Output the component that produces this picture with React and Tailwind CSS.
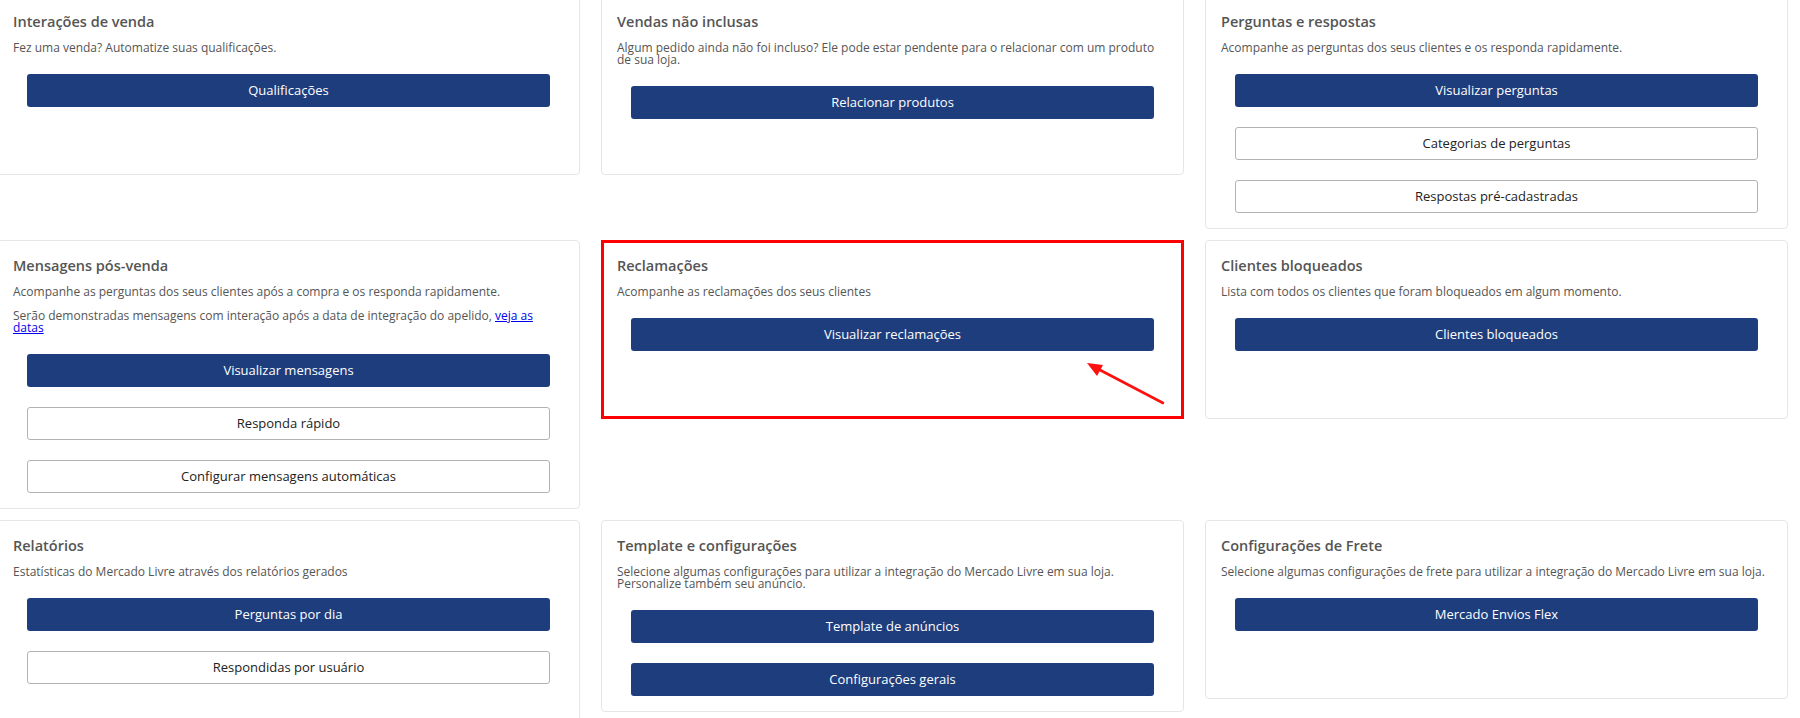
import React from "react";

const cards = [
  {
    title: "Interações de venda",
    desc: ["Fez uma venda? Automatize suas qualificações."],
    buttons: [{ label: "Qualificações", primary: true }],
  },
  {
    title: "Vendas não inclusas",
    desc: [
      "Algum pedido ainda não foi incluso? Ele pode estar pendente para o relacionar com um produto de sua loja.",
    ],
    buttons: [{ label: "Relacionar produtos", primary: true }],
  },
  {
    title: "Perguntas e respostas",
    desc: ["Acompanhe as perguntas dos seus clientes e os responda rapidamente."],
    buttons: [
      { label: "Visualizar perguntas", primary: true },
      { label: "Categorias de perguntas" },
      { label: "Respostas pré-cadastradas" },
    ],
  },
  {
    title: "Mensagens pós-venda",
    desc: [
      "Acompanhe as perguntas dos seus clientes após a compra e os responda rapidamente.",
      "LINK",
    ],
    buttons: [
      { label: "Visualizar mensagens", primary: true },
      { label: "Responda rápido" },
      { label: "Configurar mensagens automáticas" },
    ],
  },
  {
    title: "Reclamações",
    desc: ["Acompanhe as reclamações dos seus clientes"],
    buttons: [{ label: "Visualizar reclamações", primary: true }],
    highlight: true,
  },
  {
    title: "Clientes bloqueados",
    desc: ["Lista com todos os clientes que foram bloqueados em algum momento."],
    buttons: [{ label: "Clientes bloqueados", primary: true }],
  },
  {
    title: "Relatórios",
    desc: ["Estatísticas do Mercado Livre através dos relatórios gerados"],
    buttons: [
      { label: "Perguntas por dia", primary: true },
      { label: "Respondidas por usuário" },
    ],
    tall: true,
  },
  {
    title: "Template e configurações",
    desc: [
      "Selecione algumas configurações para utilizar a integração do Mercado Livre em sua loja. Personalize também seu anúncio.",
    ],
    buttons: [
      { label: "Template de anúncios", primary: true },
      { label: "Configurações gerais", primary: true },
    ],
  },
  {
    title: "Configurações de Frete",
    desc: [
      "Selecione algumas configurações de frete para utilizar a integração do Mercado Livre em sua loja.",
    ],
    buttons: [{ label: "Mercado Envios Flex", primary: true }],
  },
];

function Card({ card }) {
  return (
    <div
      className={
        "relative bg-white border border-[#e6e6e6] rounded-[4px] p-[15px] self-start " +
        (card.tall ? "min-h-[240px]" : "min-h-[179px]")
      }
    >
      <h3 className="text-[14.5px] leading-[20px] font-semibold text-[#555555] mb-[10px]">
        {card.title}
      </h3>
      <div className="flex flex-col gap-[12px]">
        {card.desc.map((d, i) =>
          d === "LINK" ? (
            <p key={i} className="text-[12px] leading-[12px] text-[#555555]">
              Serão demonstradas mensagens com interação após a data de integração do apelido,{" "}
              <a href="#" className="text-[#0000ee] underline">
                veja as datas
              </a>
            </p>
          ) : (
            <p key={i} className="text-[12px] leading-[12px] text-[#555555]">
              {d}
            </p>
          )
        )}
      </div>
      <div className="mt-[20px] px-[14px] flex flex-col gap-[20px]">
        {card.buttons.map((b, i) => (
          <button
            key={i}
            className={
              "h-[33px] w-full rounded-[3px] text-[13px] " +
              (b.primary
                ? "bg-[#1e3d7c] text-white"
                : "bg-white border border-[#b3b3b3] text-[#222222]")
            }
          >
            {b.label}
          </button>
        ))}
      </div>
      {card.highlight && (
        <>
          <div className="absolute -inset-[1px] border-[3px] border-[#ff0000] pointer-events-none" />
          <svg
            className="absolute left-0 top-0 pointer-events-none"
            width="583"
            height="179"
            viewBox="0 0 583 179"
          >
            <line x1="561" y1="162" x2="498" y2="129" stroke="#ff1010" strokeWidth="2.6" strokeLinecap="round" />
            <polygon points="485,122 501,124 495,135" fill="#ff1010" />
          </svg>
        </>
      )}
    </div>
  );
}

export default function App() {
  return (
    <div className="w-[1800px] h-[718px] overflow-hidden bg-white font-['Open_Sans',sans-serif]">
      <div className="-ml-[3px] -mt-[4px] grid grid-cols-[583px_583px_583px] gap-x-[21px] gap-y-[11px]">
        {cards.map((c, i) => (
          <Card key={i} card={c} />
        ))}
      </div>
    </div>
  );
}
